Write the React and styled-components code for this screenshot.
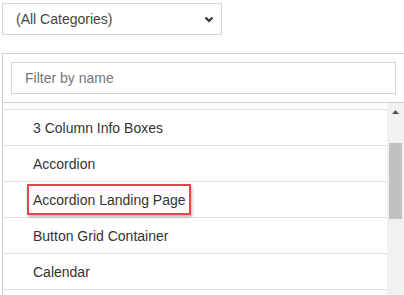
import React from 'react'
import styled, { createGlobalStyle } from 'styled-components'

const Global = createGlobalStyle`
body {
  margin: 0;
  background: #fff;
  font-family: Arial, "Liberation Sans", sans-serif;
  overflow: hidden;
}
`
const Page = styled.div`
padding: 3px 0 0 2px;
width: 402px;
height: 292px;
display: flex;
flex-direction: column;
`
const SelectBox = styled.div`
width: 220px;
height: 32px;
box-sizing: border-box;
border: 1px solid #d6d6d6;
display: flex;
align-items: center;
justify-content: space-between;
padding: 0 7px 0 13px;
font-size: 14px;
color: #444;
`
const Panel = styled.div`
margin-top: 18px;
flex: 1;
min-height: 0;
border-top: 1px solid #cfcfcf;
border-left: 1px solid #cfcfcf;
display: flex;
flex-direction: column;
`
const FilterBar = styled.div`
padding: 8px 8px 8px 8px;
border-bottom: 1px solid #cfcfcf;
`
const FilterInput = styled.input`
width: 100%;
height: 32px;
box-sizing: border-box;
border: 1px solid #d6d6d6;
padding: 0 13px;
font-family: inherit;
font-size: 14px;
color: #333;
outline: none;
&::placeholder {
  color: #777;
}
`
const Body = styled.div`
flex: 1;
min-height: 0;
display: flex;
overflow: hidden;
`
const List = styled.div`
flex: 1;
display: flex;
flex-direction: column;
`
const Sliver = styled.div`
height: 6px;
flex: none;
border-bottom: 1px solid #e0e0e0;
`
const Row = styled.div`
height: 35px;
flex: none;
border-bottom: 1px solid #e0e0e0;
display: flex;
align-items: center;
padding-left: 30px;
font-size: 14px;
color: #333;
`
const Marked = styled.span`
display: inline-flex;
align-items: center;
height: 31px;
box-sizing: border-box;
margin-left: -6px;
padding: 0 3px 0 4px;
border: 2px solid #e2474b;
box-shadow: 1px 2px 3px rgba(0, 0, 0, 0.28);
`
const Track = styled.div`
width: 17px;
flex: none;
background: #f1f1f1;
display: flex;
flex-direction: column;
align-items: center;
`
const ArrowButton = styled.div`
height: 17px;
width: 17px;
display: flex;
align-items: center;
justify-content: center;
`
const Thumb = styled.div`
margin-top: ${p => p.offset}px;
width: 13px;
height: ${p => p.size}px;
background: #c1c1c1;
`

const Chevron = () => (
  <svg width="10" height="7" viewBox="0 0 10 7">
    <path d="M1.5 1.5 L5 5 L8.5 1.5" fill="none" stroke="#333" strokeWidth="2.2" />
  </svg>
)

const items = ['3 Column Info Boxes', 'Accordion', 'Accordion Landing Page', 'Button Grid Container', 'Calendar']

export default function App() {
  return (
    <Page>
      <Global />
      <SelectBox>
        <span>(All Categories)</span>
        <Chevron />
      </SelectBox>
      <Panel>
        <FilterBar>
          <FilterInput placeholder="Filter by name" />
        </FilterBar>
        <Body>
          <List>
            <Sliver />
            {items.map(name => (
              <Row key={name}>
                {name === 'Accordion Landing Page' ? <Marked>{name}</Marked> : name}
              </Row>
            ))}
          </List>
          <Track>
            <ArrowButton>
              <svg width="7" height="4" viewBox="0 0 7 4">
                <path d="M0 4 L3.5 0 L7 4 Z" fill="#505050" />
              </svg>
            </ArrowButton>
            <Thumb offset={23} size={76} />
          </Track>
        </Body>
      </Panel>
    </Page>
  )
}
